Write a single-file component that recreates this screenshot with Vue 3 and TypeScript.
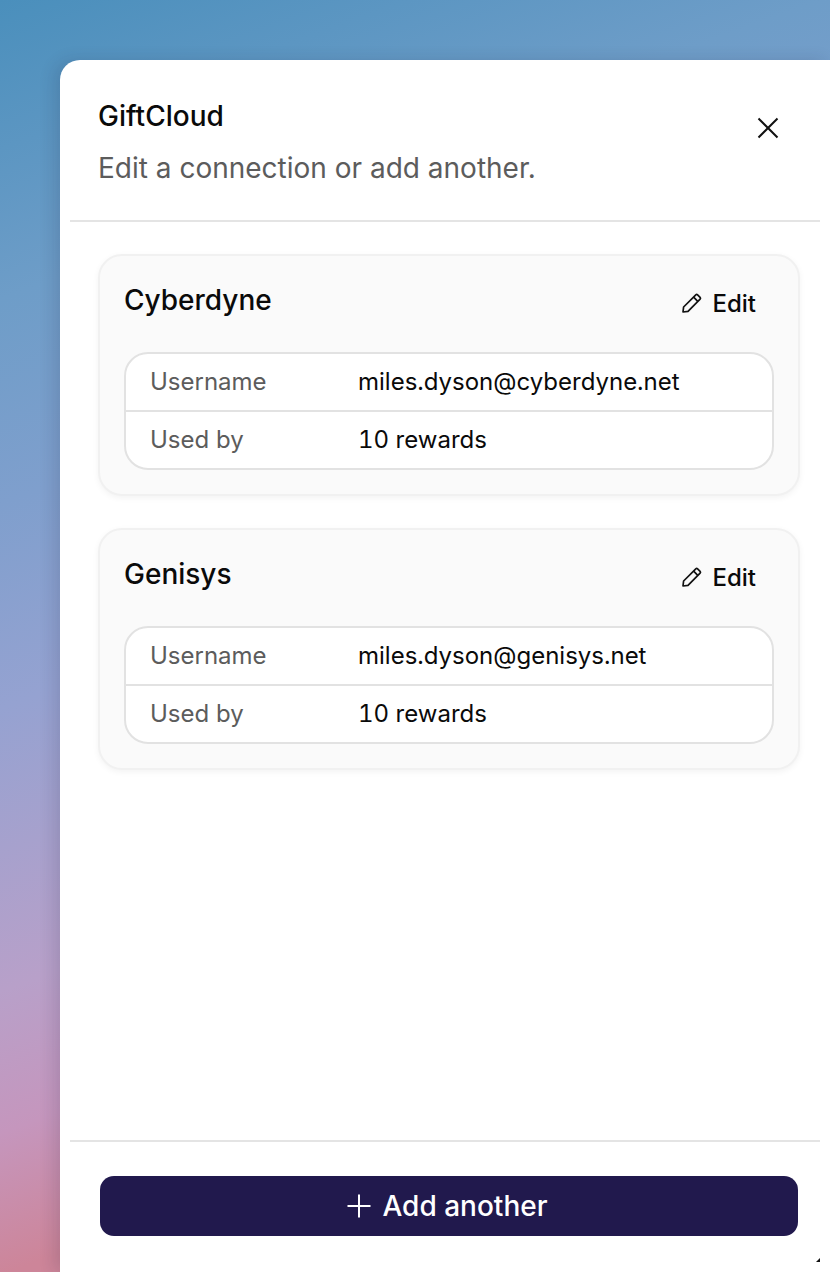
<template>
  <div class="page">
    <section class="panel">
      <header class="panel-head">
        <div>
          <h1>GiftCloud</h1>
          <p>Edit a connection or add another.</p>
        </div>
        <button class="close" aria-label="Close">
          <svg width="24" height="24" viewBox="0 0 24 24" fill="none" stroke="#111" stroke-width="2">
            <path d="M2.500 2.500l19 19M21.500 2.500l-19 19" />
          </svg>
        </button>
      </header>

      <div class="panel-body">
        <article v-for="c in connections" :key="c.name" class="card">
          <div class="card-head">
            <h2>{{ c.name }}</h2>
            <button class="edit">
              <svg width="22" height="22" viewBox="0 0 22 22" fill="none" stroke="#111" stroke-width="1.700" stroke-linejoin="round">
                <path d="M2 20l.6-5L14.800 2.900a1.300 1.300 0 0 1 1.800 0l2.500 2.500a1.300 1.300 0 0 1 0 1.800L7 19.400z" />
                <path d="M12.600 5.200l4.200 4.200" />
              </svg>
              Edit
            </button>
          </div>
          <dl class="info">
            <div class="row">
              <dt>Username</dt>
              <dd>{{ c.username }}</dd>
            </div>
            <div class="row">
              <dt>Used by</dt>
              <dd>{{ c.usedBy }}</dd>
            </div>
          </dl>
        </article>
      </div>

      <footer class="panel-foot">
        <button class="add">
          <svg width="26" height="26" viewBox="0 0 26 26" fill="none" stroke="#fff" stroke-width="2">
            <path d="M13 1.500v23M1.500 13h23" />
          </svg>
          Add another
        </button>
      </footer>
      <span class="resize-corner"></span>
    </section>
  </div>
</template>

<script setup lang="ts">
interface Connection {
  name: string
  username: string
  usedBy: string
}

const connections: Connection[] = [
  { name: 'Cyberdyne', username: 'miles.dyson@cyberdyne.net', usedBy: '10 rewards' },
  { name: 'Genisys', username: 'miles.dyson@genisys.net', usedBy: '10 rewards' },
]
</script>

<style>
html, body { margin: 0; }
</style>

<style scoped>
.page {
  box-sizing: border-box;
  width: 830px;
  height: 1272px;
  overflow: hidden;
  padding: 60px 0 0 60px;
  background: linear-gradient(160deg, #4a8fbc 0%, #6e9dc8 19%, #7f9fcd 32%, #95a2d1 45%, #b8a0c9 63%, #c596bd 72%, #cd8599 81%);
  font-family: Inter, "Liberation Sans", sans-serif;
  color: #0a0a0a;
}
.panel {
  position: relative;
  box-sizing: border-box;
  width: 770px;
  height: 1212px;
  display: flex;
  flex-direction: column;
  background: #fff;
  border-radius: 20px 0 0 0;
  box-shadow: -6px 0 16px rgba(30, 30, 60, 0.14);
}
.panel-head {
  height: 162px;
  box-sizing: border-box;
  margin: 0 10px;
  padding: 39px 40px 0 28px;
  display: flex;
  justify-content: space-between;
  align-items: flex-start;
  border-bottom: 2px solid #e4e4e4;
}
h1 {
  margin: 0;
  font-size: 28px;
  line-height: 34px;
  font-weight: 500;
}
.panel-head p {
  margin: 18px 0 0;
  font-size: 28px;
  line-height: 34px;
  color: #5c5c5c;
}
.close {
  border: none;
  background: none;
  padding: 0;
  margin-top: 17px;
  height: 24px;
}
.panel-body {
  flex: 1;
  padding: 32px 30px 0 38px;
  display: flex;
  flex-direction: column;
  gap: 32px;
}
.card {
  box-sizing: border-box;
  height: 242px;
  padding: 25px 24px 24px;
  background: #fafafa;
  border: 2px solid #f1f1f1;
  border-radius: 24px;
  box-shadow: 0 2px 6px rgba(0, 0, 0, 0.05);
}
.card-head {
  height: 71px;
  display: flex;
  justify-content: space-between;
  align-items: flex-start;
}
h2 {
  margin: 0;
  font-size: 28px;
  line-height: 38px;
  font-weight: 500;
}
.edit {
  display: flex;
  align-items: center;
  gap: 9px;
  border: none;
  background: none;
  padding: 0 18px 0 0;
  height: 44px;
  font: 500 24px Inter, "Liberation Sans", sans-serif;
  color: #0a0a0a;
}
.info {
  margin: 0;
  background: #fff;
  border: 2px solid #e2e2e2;
  border-radius: 24px;
}
.row {
  box-sizing: content-box;
  height: 54px;
  display: flex;
  align-items: center;
  padding: 0 24px 2px;
}
.row + .row {
  border-top: 2px solid #e2e2e2;
}
dt {
  width: 208px;
  font-size: 24px;
  color: #5c5c5c;
}
dd {
  margin: 0;
  font-size: 24px;
  color: #0a0a0a;
  font-variant-numeric: tabular-nums;
}
.panel-foot {
  height: 132px;
  box-sizing: border-box;
  margin: 0 10px;
  padding: 34px 22px 0 30px;
  border-top: 2px solid #e4e4e4;
}
.add {
  width: 100%;
  height: 60px;
  display: flex;
  justify-content: center;
  align-items: center;
  gap: 10px;
  border: none;
  border-radius: 14px;
  padding: 0 4px 0 0;
  background: #21194d;
  color: #fff;
  font: 500 28px Inter, "Liberation Sans", sans-serif;
}
.resize-corner {
  position: absolute;
  right: 10px;
  bottom: 10px;
  width: 0;
  height: 0;
  border-left: 4px solid transparent;
  border-bottom: 4px solid #111;
}
</style>
